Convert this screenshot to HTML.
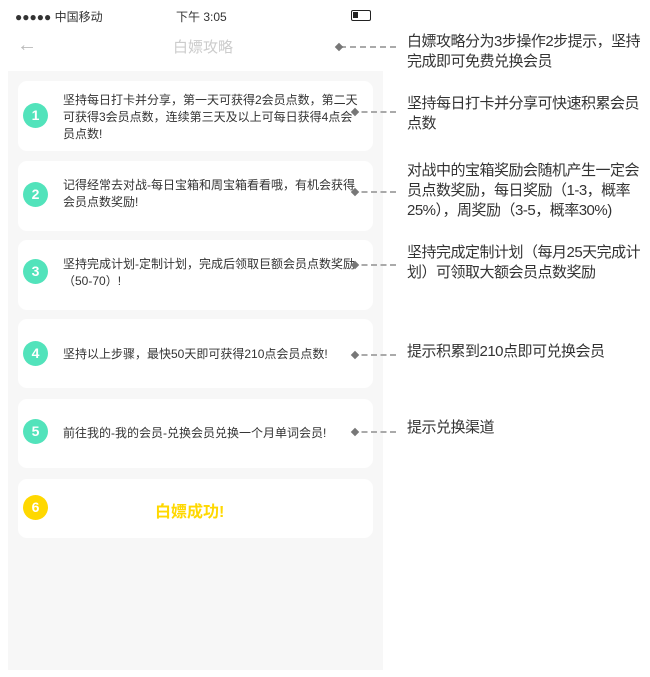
<!DOCTYPE html>
<html><head><meta charset="utf-8"><style>
*{margin:0;padding:0;box-sizing:border-box}
body{width:650px;height:677px;background:#fff;position:relative;overflow:hidden;font-family:"Liberation Sans","Noto Sans CJK SC",sans-serif;color:#333}
.a{position:absolute}
.bg{left:8px;top:71px;width:375px;height:599px;background:#f7f7f7}
.card{position:absolute;left:18px;width:355px;background:#fff;border-radius:9px}
.c{position:absolute;left:23px;width:25px;height:25px;border-radius:50%;background:#52e3bb;color:#fff;font-weight:bold;font-size:14px;text-align:center;line-height:25px}
.t{position:absolute;left:63px;width:300px;font-size:12px;line-height:17px;color:#333}
.n{position:absolute;left:407px;width:236px;font-size:15px;line-height:20px;color:#333;letter-spacing:-0.5px}
.l{position:absolute;height:0;border-top:2px dashed #aaa;width:44px;left:352px}
.d{position:absolute;width:6px;height:6px;background:#777;transform:rotate(45deg)}
</style></head><body>
<div class="a" style="left:15px;top:8px;font-size:12px;">●●●●● 中国移动</div>
<div class="a" style="left:176px;top:8px;font-size:12px;">下午 3:05</div>
<div class="a" style="left:351px;top:10px;width:20px;height:11px;border:1.5px solid #222;border-radius:2px"><div style="width:5px;height:6px;background:#222;margin:1px"></div></div>
<div class="a" style="left:17px;top:34px;font-size:20px;color:#bbb">&#8592;</div>
<div class="a" style="left:173px;top:36px;font-size:15px;color:#ccc">白嫖攻略</div>
<div class="bg a"></div>
<div class="card" style="top:81px;height:70px"></div>
<div class="card" style="top:161px;height:70px"></div>
<div class="card" style="top:240px;height:70px"></div>
<div class="card" style="top:319px;height:69px"></div>
<div class="card" style="top:399px;height:69px"></div>
<div class="card" style="top:479px;height:59px"></div>
<div class="c" style="top:103px">1</div>
<div class="c" style="top:182px">2</div>
<div class="c" style="top:259px">3</div>
<div class="c" style="top:341px">4</div>
<div class="c" style="top:419px">5</div>
<div class="c" style="top:495px;background:#ffd800">6</div>
<div class="t" style="top:92px">坚持每日打卡并分享，第一天可获得2会员点数，第二天可获得3会员点数，连续第三天及以上可每日获得4点会员点数!</div>
<div class="t" style="top:177px">记得经常去对战-每日宝箱和周宝箱看看哦，有机会获得会员点数奖励!</div>
<div class="t" style="top:256px">坚持完成计划-定制计划，完成后领取巨额会员点数奖励（50-70）!</div>
<div class="t" style="top:346px">坚持以上步骤，最快50天即可获得210点会员点数!</div>
<div class="t" style="top:425px">前往我的-我的会员-兑换会员兑换一个月单词会员!</div>
<div class="a" style="left:155px;top:498px;font-size:16px;font-weight:bold;color:#ffd800">白嫖成功!</div>
<div class="n" style="top:32px">白嫖攻略分为3步操作2步提示，坚持完成即可免费兑换会员</div>
<div class="n" style="top:94px">坚持每日打卡并分享可快速积累会员点数</div>
<div class="n" style="top:161px">对战中的宝箱奖励会随机产生一定会员点数奖励，每日奖励（1-3，概率25%），周奖励（3-5，概率30%)</div>
<div class="n" style="top:243px">坚持完成定制计划（每月25天完成计划）可领取大额会员点数奖励</div>
<div class="n" style="top:342px">提示积累到210点即可兑换会员</div>
<div class="n" style="top:418px">提示兑换渠道</div>
<div class="l" style="top:46px;left:340px;width:56px"></div><div class="d" style="left:336px;top:44px"></div>
<div class="l" style="top:111px"></div><div class="d" style="left:352px;top:109px"></div>
<div class="l" style="top:191px"></div><div class="d" style="left:352px;top:189px"></div>
<div class="l" style="top:264px"></div><div class="d" style="left:352px;top:262px"></div>
<div class="l" style="top:354px"></div><div class="d" style="left:352px;top:352px"></div>
<div class="l" style="top:431px"></div><div class="d" style="left:352px;top:429px"></div>
</body></html>
